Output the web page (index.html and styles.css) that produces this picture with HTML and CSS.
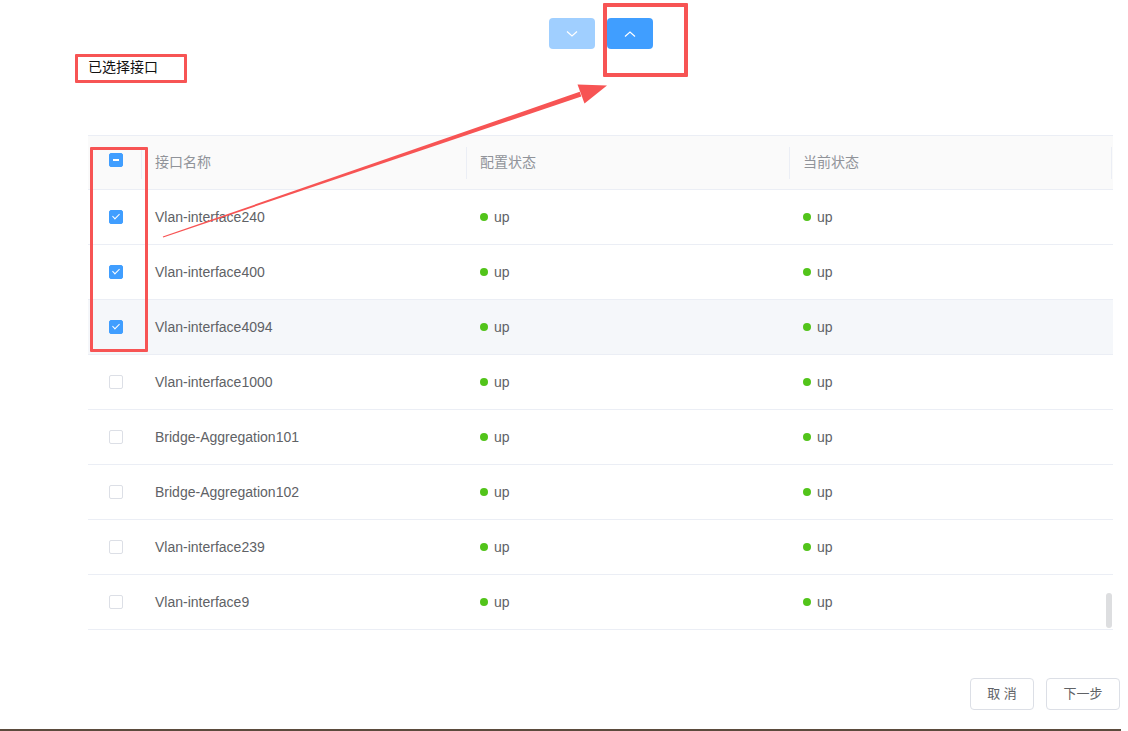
FILE: index.html
```html
<!DOCTYPE html>
<html>
<head>
    <meta charset="UTF-8">
    <title>已选择接口</title>
    <link rel="stylesheet" href="styles.css">
</head>
<body>
    <div class="page">
        <div class="transfer">
            <button class="move move-down" disabled>
                <svg width="12" height="8" viewBox="0 0 12 8"><path d="M1 1.5 L6 6 L11 1.5" fill="none" stroke="#fff" stroke-width="1.2"/></svg>
            </button>
            <button class="move">
                <svg width="12" height="8" viewBox="0 0 12 8"><path d="M1 6.5 L6 2 L11 6.5" fill="none" stroke="#fff" stroke-width="1.2"/></svg>
            </button>
        </div>
        <div class="title">已选择接口</div>

        <div class="table">
            <div class="row head">
                <div class="cell check"><span class="box indeterminate"></span></div>
                <div class="cell">接口名称</div>
                <div class="cell">配置状态</div>
                <div class="cell">当前状态</div>
            </div>
            <div class="row">
                <div class="cell check"><span class="box checked"></span></div>
                <div class="cell">Vlan-interface240</div>
                <div class="cell"><i class="dot"></i>up</div>
                <div class="cell"><i class="dot"></i>up</div>
            </div>
            <div class="row">
                <div class="cell check"><span class="box checked"></span></div>
                <div class="cell">Vlan-interface400</div>
                <div class="cell"><i class="dot"></i>up</div>
                <div class="cell"><i class="dot"></i>up</div>
            </div>
            <div class="row hover">
                <div class="cell check"><span class="box checked"></span></div>
                <div class="cell">Vlan-interface4094</div>
                <div class="cell"><i class="dot"></i>up</div>
                <div class="cell"><i class="dot"></i>up</div>
            </div>
            <div class="row">
                <div class="cell check"><span class="box"></span></div>
                <div class="cell">Vlan-interface1000</div>
                <div class="cell"><i class="dot"></i>up</div>
                <div class="cell"><i class="dot"></i>up</div>
            </div>
            <div class="row">
                <div class="cell check"><span class="box"></span></div>
                <div class="cell">Bridge-Aggregation101</div>
                <div class="cell"><i class="dot"></i>up</div>
                <div class="cell"><i class="dot"></i>up</div>
            </div>
            <div class="row">
                <div class="cell check"><span class="box"></span></div>
                <div class="cell">Bridge-Aggregation102</div>
                <div class="cell"><i class="dot"></i>up</div>
                <div class="cell"><i class="dot"></i>up</div>
            </div>
            <div class="row">
                <div class="cell check"><span class="box"></span></div>
                <div class="cell">Vlan-interface239</div>
                <div class="cell"><i class="dot"></i>up</div>
                <div class="cell"><i class="dot"></i>up</div>
            </div>
            <div class="row">
                <div class="cell check"><span class="box"></span></div>
                <div class="cell">Vlan-interface9</div>
                <div class="cell"><i class="dot"></i>up</div>
                <div class="cell"><i class="dot"></i>up</div>
            </div>
            <div class="scrollbar"></div>
        </div>

        <div class="footer">
            <button class="btn">取 消</button>
            <button class="btn">下一步</button>
        </div>
        <div class="bottom-line"></div>
    </div>

    <!-- annotations drawn on top of the screenshot -->
    <div class="mark mark-up"></div>
    <div class="mark mark-title"></div>
    <div class="mark mark-check"></div>
    <svg class="arrow" width="1128" height="731" viewBox="0 0 1128 731">
        <polygon points="163.2,237.5 162.8,236.5 579.7,91.8 581.3,96.4" fill="#f75454"/>
        <polygon points="607,85.5 577.5,84.5 584.5,103.5" fill="#f75454"/>
    </svg>
</body>
</html>
```

FILE: styles.css
```css
body {
    margin: 0;
    font-family: "Liberation Sans", "Noto Sans CJK SC", sans-serif;
    background: #fff;
    color: #606266;
}
.page {
    width: 1128px;
    height: 731px;
    overflow: hidden;
}
.transfer {
    display: flex;
    gap: 12px;
    padding: 18px 0 0 88px;
    width: 1025px;
    justify-content: center;
}
.move {
    width: 46px;
    height: 31px;
    border: none;
    border-radius: 4px;
    background: #409eff;
    display: flex;
    align-items: center;
    justify-content: center;
    padding: 0;
}
.move-down {
    background: #a0cfff;
}
.title {
    margin: 8px 0 0 88px;
    height: 20px;
    line-height: 20px;
    font-size: 14px;
    color: #111;
}
.table {
    position: relative;
    margin: 58px 0 0 88px;
    width: 1025px;
    border-top: 1px solid #ebeef5;
}
.row {
    display: grid;
    grid-template-columns: 53px 325px 323px 324px;
    height: 54px;
    border-bottom: 1px solid #ebeef5;
    font-size: 14px;
}
.row.hover {
    background: #f5f7fa;
}
.head {
    height: 53px;
    background: #fafafa;
    color: #909399;
    font-size: 14px;
}
.cell {
    display: flex;
    align-items: center;
    padding-left: 14px;
}
.head .cell {
    position: relative;
    padding-bottom: 4px;
}
.head .cell + .cell::before {
    content: "";
    position: absolute;
    left: 0;
    top: 11px;
    height: 32px;
    border-left: 1px solid #ebeef5;
}
.head .cell:last-child::after {
    content: "";
    position: absolute;
    right: 1px;
    top: 11px;
    height: 32px;
    border-left: 1px solid #ebeef5;
}
.cell.check {
    padding-left: 21px;
}
.head .cell.check {
    padding-left: 21px;
    padding-bottom: 0;
    align-items: flex-start;
    padding-top: 17px;
}
.box {
    width: 12px;
    height: 12px;
    border: 1px solid #dcdfe6;
    border-radius: 2px;
    background: #fff;
    position: relative;
}
.box.checked,
.box.indeterminate {
    background: #409eff;
    border-color: #409eff;
}
.box.checked::after {
    content: "";
    position: absolute;
    left: 4px;
    top: 1px;
    width: 3px;
    height: 6px;
    border: solid #fff;
    border-width: 0 1px 1px 0;
    transform: rotate(45deg);
}
.box.indeterminate::after {
    content: "";
    position: absolute;
    left: 3px;
    top: 5px;
    width: 6px;
    height: 2px;
    background: #fff;
}
.dot {
    width: 8px;
    height: 8px;
    border-radius: 50%;
    background: #52c41a;
    margin-right: 6px;
}
.scrollbar {
    position: absolute;
    left: 1018px;
    top: 457px;
    width: 6px;
    height: 35px;
    border-radius: 3px;
    background: #dddee0;
}
.footer {
    display: flex;
    justify-content: flex-end;
    gap: 12px;
    margin-top: 48px;
    padding-right: 8px;
}
.btn {
    height: 32px;
    width: 64px;
    padding: 0 0 3px;
    border: 1px solid #dcdfe6;
    border-radius: 4px;
    background: #fff;
    color: #606266;
    font-family: inherit;
    font-size: 13px;
}
.btn + .btn {
    width: 74px;
}
.bottom-line {
    margin-top: 19px;
    width: 1121px;
    height: 2px;
    background: #5b4b3d;
}
.mark {
    position: absolute;
    border: 4px solid #f75454;
    border-radius: 1px;
}
.mark-up {
    left: 603px;
    top: 3px;
    width: 77px;
    height: 66px;
}
.mark-title {
    left: 75px;
    top: 54px;
    width: 106px;
    height: 23px;
    border-width: 3px;
}
.mark-check {
    left: 90px;
    top: 147px;
    width: 52px;
    height: 199px;
    border-width: 3px;
}
.arrow {
    position: absolute;
    left: 0;
    top: 0;
    pointer-events: none;
}
```
